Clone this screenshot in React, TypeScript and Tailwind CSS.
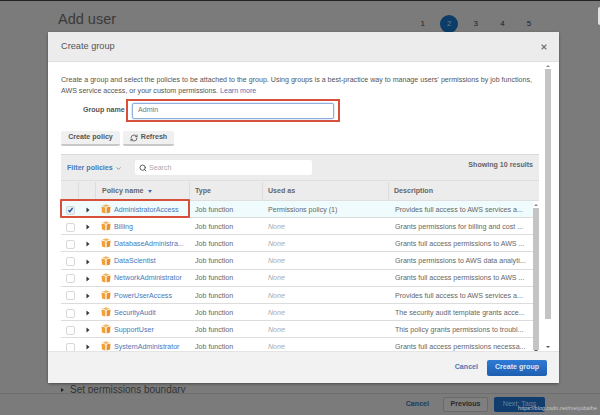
import { ChevronDown, Search, RefreshCw, X } from "lucide-react";

const POLICIES = [
  { name: "AdministratorAccess", used: "Permissions policy (1)", desc: "Provides full access to AWS services a...", checked: true },
  { name: "Billing", used: "None", desc: "Grants permissions for billing and cost ..." },
  { name: "DatabaseAdministra...", used: "None", desc: "Grants full access permissions to AWS ..." },
  { name: "DataScientist", used: "None", desc: "Grants permissions to AWS data analyti..." },
  { name: "NetworkAdministrator", used: "None", desc: "Grants full access permissions to AWS ..." },
  { name: "PowerUserAccess", used: "None", desc: "Provides full access to AWS services a..." },
  { name: "SecurityAudit", used: "None", desc: "The security audit template grants acce..." },
  { name: "SupportUser", used: "None", desc: "This policy grants permissions to troubl..." },
  { name: "SystemAdministrator", used: "None", desc: "Grants full access permissions necessa..." },
];

function PolicyIcon() {
  return (
    <svg width="10" height="10" viewBox="0 0 10 10" className="mb-[2px] shrink-0">
      <path d="M0.5 2.5 L4.4 3.6 V9.6 L1 8.4 Z" fill="#f0a13a" />
      <path d="M9.5 2.5 L5.6 3.6 V9.6 L9 8.4 Z" fill="#e8912a" />
      <path d="M5 0.3 L8.8 1.7 L5 2.9 L1.2 1.7 Z" fill="#f4b560" />
    </svg>
  );
}

function Arrow() {
  return (
    <svg width="4" height="6" viewBox="0 0 4 6">
      <path d="M0.5 0.5 L3.5 3 L0.5 5.5 Z" fill="#333" />
    </svg>
  );
}

function PolicyRow({ name, used, desc, checked }: { name: string; used: string; desc: string; checked?: boolean }) {
  return (
    <div className={`flex h-[17.17px] shrink-0 items-center border-b border-[#dcdcdc] pt-[2px] ${checked ? "bg-[#effbfd]" : "bg-white"}`}>
      <div className="flex w-[18px] shrink-0 justify-center">
        <div className={`flex h-[9px] w-[9px] items-center justify-center rounded-[2px] border border-[#d8d8d8] ${checked ? "bg-[#e8eef6]" : "bg-white"}`}>
          {checked && (
            <svg width="7" height="6" viewBox="0 0 7 6">
              <path d="M1.4 3.2 L2.8 4.6 L5.6 1" stroke="#1f5fa8" strokeWidth="1.4" fill="none" />
            </svg>
          )}
        </div>
      </div>
      <div className="flex w-[17px] shrink-0 justify-center">
        <Arrow />
      </div>
      <div className="flex w-[94px] shrink-0 items-center gap-[3px] pl-[5px] text-[#4a78b8]">
        <PolicyIcon />
        <span className="whitespace-nowrap">{name}</span>
      </div>
      <div className="w-[73px] shrink-0 pl-[5px] text-[#666]">Job function</div>
      <div className={`w-[126px] shrink-0 pl-[5px] ${used === "None" ? "italic text-[#aaa]" : "text-[#666]"}`}>{used}</div>
      <div className="flex-1 whitespace-nowrap pl-[6px] text-[#666]">{desc}</div>
    </div>
  );
}

function Scrollbar({ thumbClass }: { thumbClass: string }) {
  return (
    <div className="flex w-[6px] shrink-0 flex-col items-center bg-white">
      <div className="mt-[3px] h-0 w-0 shrink-0 border-x-[2px] border-b-[2px] border-x-transparent border-b-[#888]" />
      <div className={`mt-[2px] w-full shrink-0 bg-[#c4c4c4] ${thumbClass}`} />
      <div className="mt-auto mb-[3px] h-0 w-0 border-x-[2px] border-t-[2px] border-x-transparent border-t-[#555]" />
    </div>
  );
}

export default function App() {
  return (
    <div className="relative h-[415px] w-[600px] overflow-hidden bg-[#7b7b7b] font-['Liberation_Sans',sans-serif] text-[7.1px]">
      {/* page behind the dialog */}
      <div className="flex h-full flex-col">
        <div className="h-px bg-[#222]" />
        <div className="flex h-[392px] flex-col">
          <div className="flex items-start justify-between pl-[58px] pr-[62px]">
            <h1 className="mt-[10px] text-[14.5px] leading-[17px] text-[#3a3a3a]">Add user</h1>
            <div className="mt-[13px] flex items-center gap-[8.6px] pt-[1px] text-[8px] text-[#222]">
              <span className="w-[18px] text-center">1</span>
              <span className="flex h-[18px] w-[18px] items-center justify-center rounded-full bg-[#0b3d68] text-[#5f7f9b]">2</span>
              <span className="w-[18px] text-center">3</span>
              <span className="w-[18px] text-center">4</span>
              <span className="w-[18px] text-center">5</span>
            </div>
          </div>
          <div className="mt-auto flex h-[10px] gap-[6px] overflow-hidden pl-[61px] text-[10px] leading-[14px] text-[#333]">
            <span className="mt-[5px] h-0 w-0 border-y-[2px] border-l-[3px] border-y-transparent border-l-[#222]" />
            <span>Set permissions boundary</span>
          </div>
        </div>
        <div className="flex flex-1 items-center justify-end border-t border-[#6e6e6e] pr-[55px] font-bold">
          <span className="mr-[14px] text-[#1d3a5c]">Cancel</span>
          <div className="mr-[6px] flex h-[15px] w-[45px] items-center justify-center rounded-[2px] border border-[#6a6a6a] bg-[#7f7f7f] text-[#2b2b2b]">Previous</div>
          <div className="flex h-[15px] w-[51px] items-center justify-center rounded-[2px] bg-[#103c6e] font-normal text-[#6f8296]">Next: Tags</div>
        </div>
      </div>
      <div className="absolute right-0 top-[7px] h-[18px] w-[2px] rounded-l-[2px] bg-[#e4e4e4]" />
      <div className="absolute right-[3px] top-[404px] text-[5.5px] leading-[8px] text-[#c9c9c9]">https://blog.csdn.net/meiyubaihe</div>

      {/* dialog */}
      <div className="absolute left-[48px] top-[32px] flex h-[351px] w-[511px] flex-col rounded-[2px] bg-white shadow-[0_1px_3px_rgba(0,0,0,0.4)]">
        <div className="flex h-[30px] shrink-0 items-center justify-between border-b border-[#dfdfdf] bg-[#ececec] pl-[13px] pr-[11px]">
          <span className="text-[9.2px] text-[#555]">Create group</span>
          <X size={8} strokeWidth={3.5} className="text-[#777]" />
        </div>
        <div className="flex h-[289px] shrink-0">
          <div className="w-[497px] shrink-0 overflow-hidden pl-[13px]">
            <p className="mt-[13px] whitespace-nowrap leading-[10.5px] text-[#555]">
              Create a group and select the policies to be attached to the group. Using groups is a best-practice way to manage users' permissions by job functions,
              <br />
              AWS service access, or your custom permissions. <span className="text-[#4a78b8]">Learn more</span>
            </p>
            <div className="mt-[3px] flex items-center">
              <span className="ml-[22px] w-[43px] shrink-0 whitespace-nowrap font-bold text-[#555]">Group name</span>
              <div className="flex h-[23px] w-[214px] shrink-0 items-center border-2 border-[#d9503a] pl-[4px]">
                <div className="flex h-[16px] w-[202px] items-center rounded-[2px] border border-[#8fb0de] bg-white pl-[5px] text-[#777] shadow-[0_0_2px_#9dbce6]">Admin</div>
              </div>
            </div>
            <div className="mt-[9px] flex gap-[3px] font-bold text-[#555]">
              <div className="flex h-[15px] w-[59px] items-center justify-center rounded-[2px] border-b-2 border-[#c8c8c8] bg-[#f0f0f0]">Create policy</div>
              <div className="flex h-[15px] w-[51px] items-center justify-center gap-[3px] rounded-[2px] border-b-2 border-[#c8c8c8] bg-[#f0f0f0]">
                <RefreshCw size={8} strokeWidth={2.5} />
                Refresh
              </div>
            </div>
            <div className="mt-[8px] flex h-[197px] w-[478px] flex-col border-t border-[#dadada]">
              <div className="flex h-[25px] shrink-0 bg-[#ececec] pl-[6px] pr-[6px]">
                <div className="flex h-full w-[68px] shrink-0 items-center gap-[3px] pt-[1px] font-bold text-[#4a78b8]">
                  Filter policies <ChevronDown size={7} strokeWidth={2} className="ml-[-1px] text-[#666]" />
                </div>
                <div className="mt-[5px] flex h-[15px] w-[177px] items-center gap-[2px] rounded-[2px] bg-white pl-[4px] pt-[1px] text-[#aaa]">
                  <Search size={8} strokeWidth={2.5} className="text-[#444]" />
                  Search
                </div>
                <span className="ml-auto mt-[5px] font-bold text-[#666]">Showing 10 results</span>
              </div>
              <div className="flex h-[21px] shrink-0 items-center border-y border-[#dfdfdf] bg-[#ececec] pt-[1px] font-bold text-[#666]">
                <div className="h-full w-[18px] shrink-0 border-r border-[#dcdcdc]" />
                <div className="h-full w-[17px] shrink-0 border-r border-[#dcdcdc]" />
                <div className="flex h-full w-[94px] shrink-0 items-center gap-[5px] border-r border-[#dcdcdc] pl-[6px]">
                  Policy name
                  <span className="h-0 w-0 border-x-[2.5px] border-t-[3px] border-x-transparent border-t-[#3f70b5]" />
                </div>
                <div className="flex h-full w-[73px] shrink-0 items-center border-r border-[#dcdcdc] pl-[5px]">Type</div>
                <div className="flex h-full w-[126px] shrink-0 items-center border-r border-[#dcdcdc] pl-[5px]">Used as</div>
                <div className="flex h-full flex-1 items-center pl-[5px]">Description</div>
              </div>
              <div className="relative flex min-h-0 flex-1">
                <div className="flex w-[472px] shrink-0 flex-col overflow-hidden">
                  {POLICIES.map((p) => (
                    <PolicyRow key={p.name} {...p} />
                  ))}
                </div>
                <div className="flex overflow-hidden">
                  <Scrollbar thumbClass="h-[142px]" />
                </div>
                <div className="absolute left-[-1px] top-[-2px] h-[19px] w-[130px] rounded-[1px] border-2 border-[#d9503a]" />
              </div>
            </div>
          </div>
          <Scrollbar thumbClass="h-[250px]" />
        </div>
        <div className="flex flex-1 items-center justify-end gap-[9px] border-t border-[#e4e4e4] bg-[#f2f2f2] pr-[12px] font-bold">
          <span className="text-[#4a78b8]">Cancel</span>
          <div className="flex h-[16px] w-[60px] items-center justify-center rounded-[2px] bg-[linear-gradient(#2f7ad6,#1d5fb0)] text-[#dfe9f5]">Create group</div>
        </div>
      </div>
    </div>
  );
}
